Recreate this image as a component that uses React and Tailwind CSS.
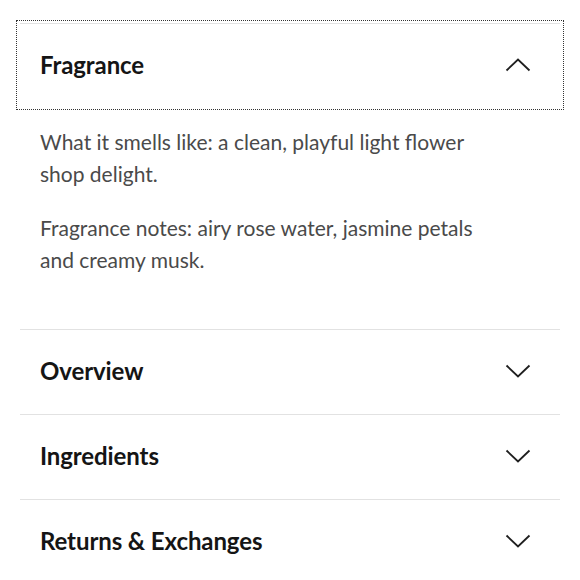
import React from "react";

function Chevron({ up }) {
  return (
    <svg width="26" height="14" viewBox="0 0 26 14" fill="none" className="shrink-0">
      {up ? (
        <path d="M1.5 12.5 L13 1.5 L24.5 12.5" stroke="#1f1f1f" strokeWidth="1.8" />
      ) : (
        <path d="M1.5 1.5 L13 12.5 L24.5 1.5" stroke="#1f1f1f" strokeWidth="1.8" />
      )}
    </svg>
  );
}

function Row({ title }) {
  return (
    <div className="border-t border-[#e2e2e2]">
      <div className="h-[84px] flex items-center justify-between pl-5 pr-[29px] pb-[3px]">
        <span className="text-[24px] font-bold text-[#151515] tracking-[-0.1px]">{title}</span>
        <Chevron />
      </div>
    </div>
  );
}

export default function App() {
  return (
    <div className="w-[580px] h-[580px] bg-white overflow-hidden" style={{ fontFamily: "Lato, 'Noto Sans', sans-serif" }}>
      <div className="mx-5 pt-[23px]">
        <div className="relative border-t border-[#e2e2e2]">
          <div className="absolute left-[-4px] top-[-4px] w-[548px] h-[90px] border border-dotted border-[#333]" />
          <div className="h-[84px] flex items-center justify-between pl-5 pr-[29px] pb-[3px]">
            <span className="text-[24px] font-bold text-[#151515] tracking-[-0.1px]">Fragrance</span>
            <Chevron up />
          </div>
        </div>
        <div className="pl-5 pt-[18px] pb-[53px] text-[21px] leading-[32px] text-[#4a4a4a]">
          <p>
            What it smells like: a clean, playful light flower
            <br />
            shop delight.
          </p>
          <p className="mt-[22px]">
            Fragrance notes: airy rose water, jasmine petals
            <br />
            and creamy musk.
          </p>
        </div>
        <Row title="Overview" />
        <Row title="Ingredients" />
        <Row title="Returns & Exchanges" />
      </div>
    </div>
  );
}
